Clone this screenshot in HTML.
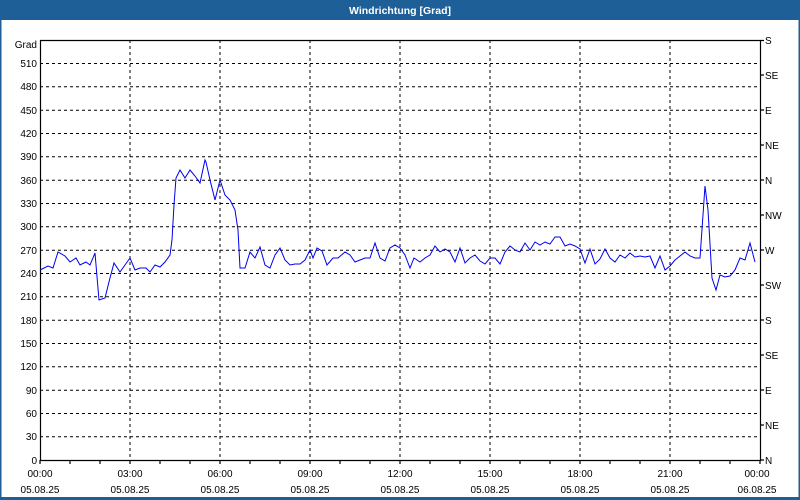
<!DOCTYPE html>
<html><head><meta charset="utf-8"><style>
html,body{margin:0;padding:0;width:800px;height:500px;overflow:hidden;background:#fff}
</style></head><body>
<svg width="800" height="500" xmlns="http://www.w3.org/2000/svg" font-family="Liberation Sans, sans-serif" font-size="10">
<rect x="0" y="0" width="800" height="500" fill="#fff"/>
<rect x="0" y="0" width="800" height="20" fill="#1f5f97"/>
<rect x="0" y="0" width="1.5" height="500" fill="#1f5f97"/>
<rect x="798.5" y="0" width="1.5" height="500" fill="#1f5f97"/>
<rect x="0" y="497" width="800" height="3" fill="#1f5f97"/>
<text x="400" y="14" fill="#fff" font-weight="bold" text-anchor="middle" font-size="10.5">Windrichtung [Grad]</text>
<g stroke="#000" stroke-width="1" stroke-dasharray="3,3" fill="none">
<path d="M130 40V460M220 40V460M310 40V460M400 40V460M490 40V460M580 40V460M670 40V460"/>
<path d="M40 63.5H760M40 86.8H760M40 110.2H760M40 133.5H760M40 156.8H760M40 180.2H760M40 203.5H760M40 226.8H760M40 250.2H760M40 273.5H760M40 296.8H760M40 320.2H760M40 343.5H760M40 366.8H760M40 390.2H760M40 413.5H760M40 436.8H760"/>
</g>
<g stroke="#000" stroke-width="1.2" fill="none">
<path d="M40.5 40V460.5H760.5V40M40 40.5H760"/>
<path d="M760 40.5h4M760 75h4M760 110h4M760 145h4M760 180h4M760 215h4M760 250h4M760 285h4M760 320h4M760 355h4M760 390h4M760 425h4M760 460h4"/>
<path d="M70 460v4M100 460v4M130 460v4M160 460v4M190 460v4M220 460v4M250 460v4M280 460v4M310 460v4M340 460v4M370 460v4M400 460v4M430 460v4M460 460v4M490 460v4M520 460v4M550 460v4M580 460v4M610 460v4M640 460v4M670 460v4M700 460v4M730 460v4M40 460v4M760 460v4"/>
</g>
<g text-anchor="end" fill="#000">
<text x="37" y="48">Grad</text>
<text x="37" y="67">510</text><text x="37" y="90">480</text><text x="37" y="114">450</text><text x="37" y="137">420</text><text x="37" y="160">390</text><text x="37" y="184">360</text><text x="37" y="207">330</text><text x="37" y="230">300</text><text x="37" y="254">270</text><text x="37" y="277">240</text><text x="37" y="300">210</text><text x="37" y="324">180</text><text x="37" y="347">150</text><text x="37" y="370">120</text><text x="37" y="394">90</text><text x="37" y="417">60</text><text x="37" y="440">30</text><text x="37" y="464">0</text>
</g>
<g fill="#000">
<text x="765" y="44">S</text><text x="765" y="79">SE</text><text x="765" y="114">E</text><text x="765" y="149">NE</text><text x="765" y="184">N</text><text x="765" y="219">NW</text><text x="765" y="254">W</text><text x="765" y="289">SW</text><text x="765" y="324">S</text><text x="765" y="359">SE</text><text x="765" y="394">E</text><text x="765" y="429">NE</text><text x="765" y="464">N</text>
</g>
<g text-anchor="middle" fill="#000">
<text x="40" y="477">00:00</text><text x="40" y="493">05.08.25</text>
<text x="130" y="477">03:00</text><text x="130" y="493">05.08.25</text>
<text x="220" y="477">06:00</text><text x="220" y="493">05.08.25</text>
<text x="310" y="477">09:00</text><text x="310" y="493">05.08.25</text>
<text x="400" y="477">12:00</text><text x="400" y="493">05.08.25</text>
<text x="490" y="477">15:00</text><text x="490" y="493">05.08.25</text>
<text x="580" y="477">18:00</text><text x="580" y="493">05.08.25</text>
<text x="670" y="477">21:00</text><text x="670" y="493">05.08.25</text>
<text x="757" y="477">00:00</text><text x="757" y="493">06.08.25</text>
</g>
<polyline fill="none" stroke="#0000ee" stroke-width="1" points="40,270 48,266 53,268 58,252 65,256 70,262 76,258 80,265 86,262 90,265 95,253 99,300 105,298 110,278 114,263 120,272 125,265 130,258 135,270 140,268 146,268 150,272 155,265 160,267 165,262 170,255 172,240 174,205 176,178 180,170 185,178 190,170 195,176 200,183 205,160 206,162 210,180 215,200 220,180 225,195 230,200 235,210 238,230 240,268 245,268 250,252 255,258 260,247 265,265 270,268 275,255 280,248 285,260 290,265 295,264 300,264 305,260 310,250 313,258 317,248 322,251 327,265 333,258 338,258 345,252 350,255 355,262 360,260 365,258 370,258 375,243 380,258 385,261 390,248 395,245 400,248 405,255 410,268 414,258 420,262 425,258 430,255 435,246 440,252 445,249 450,252 455,262 460,248 465,263 470,258 475,255 480,261 485,264 490,258 495,258 500,264 505,252 510,246 515,250 520,252 525,243 530,250 535,242 540,245 545,242 550,244 555,237 560,237 565,246 570,244 575,246 580,249 585,263 590,249 595,264 600,259 605,249 610,258 615,262 620,255 625,258 630,253 635,257 640,256 645,257 650,256 655,268 660,256 665,270 670,266 675,260 680,256 685,252 690,256 695,258 700,258 705,186 708,210 712,278 716,290 720,275 725,277 730,276 735,270 740,258 745,260 750,243 755,262"/>
</svg>
</body></html>
